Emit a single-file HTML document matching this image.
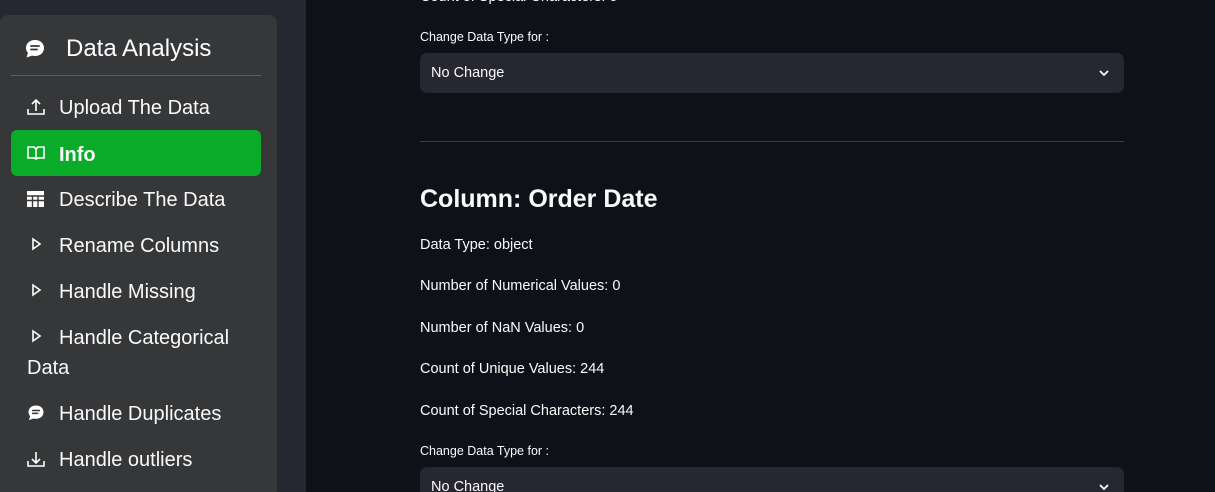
<!DOCTYPE html>
<html style="overflow:hidden;height:492px"><head><style>
*{margin:0;padding:0;box-sizing:border-box}
body{width:1215px;height:492px;overflow:hidden;background:#0e1117;font-family:"Liberation Sans",sans-serif;color:#fafafa;position:relative}
#side{position:absolute;left:0;top:0;width:306px;height:492px;background:#262730;overflow:hidden}
#card{position:absolute;left:0;top:15px;width:277px;height:490px;background:#353739;border-radius:8px}
.title{position:absolute;left:66px;top:35px;font-size:24px;color:#fff}
.hr{position:absolute;left:11px;top:75px;width:250px;height:1px;background:#5a5c5e}
.it{position:absolute;left:59px;font-size:20px;color:#fafafa}
.ic{position:absolute;left:26px}
.act{position:absolute;left:11px;top:130px;width:250px;height:46px;background:#09ab28;border-radius:6px}
.m{position:absolute;left:420px;font-size:14.5px;color:#fafafa}
.sel{position:absolute;left:420px;width:704px;height:40px;background:#262730;border-radius:7px}
.sel span{position:absolute;left:11px;top:12px;font-size:14.5px}
.sel svg{position:absolute;right:14px;top:15px}
</style></head><body>
<div id="side"><div id="card"></div>
<svg class="ic" style="left:23px;top:37px" width="24" height="24" viewBox="0 0 24 24"><path d="M12 3C6.5 3 3 6.5 3 11c0 2 .8 3.7 2 5l-1.5 4.5L9 18.6c1 .3 2 .4 3 .4 5.5 0 9-3.5 9-8s-3.5-8-9-8z" fill="#fff"/><path d="M8 9h8M8 12.5h6" stroke="#353739" stroke-width="1.8" stroke-linecap="round"/></svg>
<div class="title">Data Analysis</div>
<div class="hr"></div>
<svg class="ic" style="top:97px" width="20" height="20" viewBox="0 0 20 20" fill="none" stroke="#fff" stroke-width="1.6"><path d="M2 12v5h16v-5M10 14V3M6 7l4-4 4 4"/></svg>
<div class="it" style="top:97px">Upload The Data</div>
<div class="act"></div>
<svg class="ic" style="top:145px" width="20" height="16" viewBox="0 0 20 16" fill="none" stroke="#fff" stroke-width="1.6"><path d="M2 2h6l2 2 2-2h6v11h-6l-2 1-2-1H2zM10 4v10"/></svg>
<div class="it" style="top:144px;font-weight:bold">Info</div>
<svg class="ic" style="top:190px" width="19" height="18" viewBox="0 0 19 18"><rect x="1" y="1" width="17" height="16" fill="#fff"/><path d="M1 6h17M1 10.5h17M6.5 6v11M12 6v11" stroke="#353739" stroke-width="1.4"/></svg>
<div class="it" style="top:189px">Describe The Data</div>
<svg class="ic" style="left:31px;top:237px" width="12" height="14" viewBox="0 0 12 14" fill="none" stroke="#fff" stroke-width="1.6"><path d="M2 2l7 5-7 5z"/></svg>
<div class="it" style="top:235px">Rename Columns</div>
<svg class="ic" style="left:31px;top:283px" width="12" height="14" viewBox="0 0 12 14" fill="none" stroke="#fff" stroke-width="1.6"><path d="M2 2l7 5-7 5z"/></svg>
<div class="it" style="top:281px">Handle Missing</div>
<svg class="ic" style="left:31px;top:329px" width="12" height="14" viewBox="0 0 12 14" fill="none" stroke="#fff" stroke-width="1.6"><path d="M2 2l7 5-7 5z"/></svg>
<div class="it" style="top:327px">Handle Categorical</div>
<div class="it" style="top:357px;left:27px">Data</div>
<svg class="ic" style="top:403px" width="20" height="20" viewBox="0 0 24 24"><path d="M12 3C6.5 3 3 6.5 3 11c0 2 .8 3.7 2 5l-1.5 4.5L9 18.6c1 .3 2 .4 3 .4 5.5 0 9-3.5 9-8s-3.5-8-9-8z" fill="#fff"/><path d="M8 9h8M8 12.5h6" stroke="#353739" stroke-width="1.8" stroke-linecap="round"/></svg>
<div class="it" style="top:403px">Handle Duplicates</div>
<svg class="ic" style="top:449px" width="20" height="20" viewBox="0 0 20 20" fill="none" stroke="#fff" stroke-width="1.6"><path d="M2 12v5h16v-5M10 3v11M6 10l4 4 4-4"/></svg>
<div class="it" style="top:449px">Handle outliers</div>
</div>
<div class="m" style="top:-11px">Count of Special Characters: 0</div>
<div class="m" style="top:30px;font-size:12.5px">Change Data Type for :</div>
<div class="sel" style="top:53px"><span>No Change</span><svg width="12" height="10" viewBox="0 0 12 10" fill="none" stroke="#fff" stroke-width="1.8"><path d="M2 3l4 4 4-4"/></svg></div>
<div style="position:absolute;left:420px;top:141px;width:704px;height:1px;background:#3a3d44"></div>
<div class="m" style="top:185px;font-size:25px;font-weight:bold">Column: Order Date</div>
<div class="m" style="top:237px">Data Type: object</div>
<div class="m" style="top:278px">Number of Numerical Values: 0</div>
<div class="m" style="top:320px">Number of NaN Values: 0</div>
<div class="m" style="top:361px">Count of Unique Values: 244</div>
<div class="m" style="top:403px">Count of Special Characters: 244</div>
<div class="m" style="top:444px;font-size:12.5px">Change Data Type for :</div>
<div class="sel" style="top:467px;height:25px;border-radius:7px 7px 0 0"><span style="top:12px">No Change</span><svg width="12" height="10" viewBox="0 0 12 10" fill="none" stroke="#fff" stroke-width="1.8"><path d="M2 3l4 4 4-4"/></svg></div>
</body></html>
